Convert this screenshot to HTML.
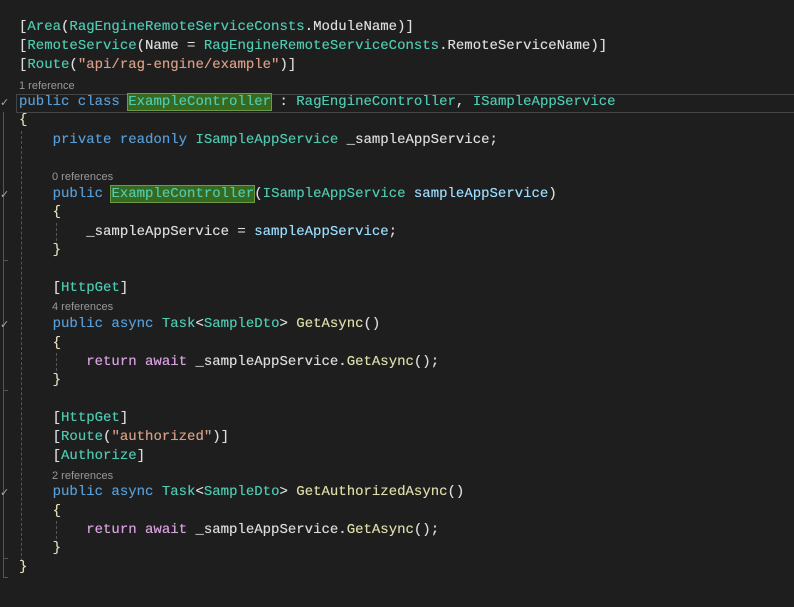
<!DOCTYPE html>
<html><head><meta charset="utf-8"><style>
html,body{margin:0;padding:0;background:#1e1e1e;width:794px;height:607px;overflow:hidden;position:relative}
.l{position:absolute;left:19px;height:19px;line-height:19px;font-family:"Liberation Mono",monospace;font-size:14px;color:#dcdcdc;white-space:pre;text-shadow:0 0 0.4px currentColor}
.c{position:absolute;left:52px;font-family:"Liberation Sans",sans-serif;font-size:11px;color:#999;line-height:14px;white-space:pre}
.k{color:#569cd6}.t{color:#4ec9b0}.s{color:#d69d85}.p{color:#9cdcfe}.m{color:#dcdcaa}.r{color:#d8a0df}.b{color:#e2dcb8}
.hl{background:#376a1e;outline:1px solid #6c9a48;color:#4ec9b0}
.chk{position:absolute;left:0;font-size:11px;color:#aaa;font-family:"DejaVu Sans",sans-serif}
.vg{position:absolute;width:0;border-left:1px dashed #555}
</style></head><body>
<div style="position:absolute;left:16px;top:94px;width:780px;height:17px;border:1px solid #464646;border-right:none"></div>
<div style="position:absolute;left:3px;top:112px;width:1px;height:465px;background:#555"></div>
<div style="position:absolute;left:3px;top:260px;width:5px;height:1px;background:#555"></div>
<div style="position:absolute;left:3px;top:390px;width:5px;height:1px;background:#555"></div>
<div style="position:absolute;left:3px;top:558px;width:5px;height:1px;background:#555"></div>
<div style="position:absolute;left:3px;top:577px;width:5px;height:1px;background:#555"></div>
<div class="vg" style="left:21px;top:131px;height:430px"></div>
<div class="vg" style="left:56px;top:223px;height:18px"></div>
<div class="vg" style="left:56px;top:353px;height:18px"></div>
<div class="vg" style="left:56px;top:521px;height:18px"></div>
<div class="chk" style="top:96px">✓</div>
<div class="chk" style="top:188px">✓</div>
<div class="chk" style="top:318px">✓</div>
<div class="chk" style="top:486px">✓</div>

<div class="l" style="top:18px">[<span class="t">Area</span>(<span class="t">RagEngineRemoteServiceConsts</span>.ModuleName)]</div>
<div class="l" style="top:37px">[<span class="t">RemoteService</span>(Name = <span class="t">RagEngineRemoteServiceConsts</span>.RemoteServiceName)]</div>
<div class="l" style="top:56px">[<span class="t">Route</span>(<span class="s">"api/rag-engine/example"</span>)]</div>
<div class="c" style="top:79px;left:19px">1 reference</div>
<div class="l" style="top:93px"><span class="k">public class</span> <span class="hl">ExampleController</span> : <span class="t">RagEngineController</span>, <span class="t">ISampleAppService</span></div>
<div class="l" style="top:111px"><span class="b">{</span></div>
<div class="l" style="top:131px">    <span class="k">private readonly</span> <span class="t">ISampleAppService</span> _sampleAppService;</div>
<div class="c" style="top:170px">0 references</div>
<div class="l" style="top:185px">    <span class="k">public</span> <span class="hl">ExampleController</span>(<span class="t">ISampleAppService</span> <span class="p">sampleAppService</span>)</div>
<div class="l" style="top:203px">    <span class="b">{</span></div>
<div class="l" style="top:223px">        _sampleAppService = <span class="p">sampleAppService</span>;</div>
<div class="l" style="top:241px">    <span class="b">}</span></div>
<div class="l" style="top:279px">    [<span class="t">HttpGet</span>]</div>
<div class="c" style="top:300px">4 references</div>
<div class="l" style="top:315px">    <span class="k">public async</span> <span class="t">Task</span>&lt;<span class="t">SampleDto</span>&gt; <span class="m">GetAsync</span>()</div>
<div class="l" style="top:334px">    <span class="b">{</span></div>
<div class="l" style="top:353px">        <span class="r">return await</span> _sampleAppService.<span class="m">GetAsync</span>();</div>
<div class="l" style="top:371px">    <span class="b">}</span></div>
<div class="l" style="top:409px">    [<span class="t">HttpGet</span>]</div>
<div class="l" style="top:428px">    [<span class="t">Route</span>(<span class="s">"authorized"</span>)]</div>
<div class="l" style="top:447px">    [<span class="t">Authorize</span>]</div>
<div class="c" style="top:469px">2 references</div>
<div class="l" style="top:483px">    <span class="k">public async</span> <span class="t">Task</span>&lt;<span class="t">SampleDto</span>&gt; <span class="m">GetAuthorizedAsync</span>()</div>
<div class="l" style="top:502px">    <span class="b">{</span></div>
<div class="l" style="top:521px">        <span class="r">return await</span> _sampleAppService.<span class="m">GetAsync</span>();</div>
<div class="l" style="top:539px">    <span class="b">}</span></div>
<div class="l" style="top:558px"><span class="b">}</span></div>
</body></html>
